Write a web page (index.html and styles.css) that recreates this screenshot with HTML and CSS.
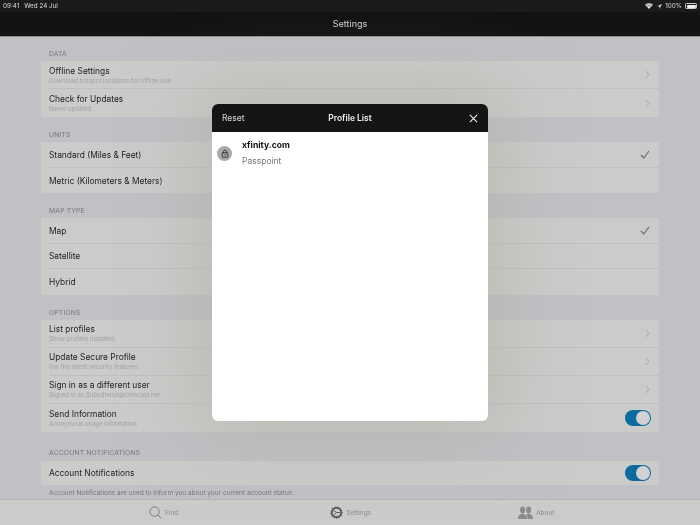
FILE: index.html
```html
<!DOCTYPE html>
<html lang="en">
<head>
<meta charset="utf-8">
<title>Settings</title>
<link rel="stylesheet" href="styles.css">
</head>
<body>
<div class="app">
  <header class="top">
    <div class="status">
      <div class="status-left"><span>09:41</span><span>Wed 24 Jul</span></div>
      <div class="status-right">
        <svg class="wifi" viewBox="0 0 12 9"><path d="M6 9 0 2.6C3.4-.8 8.6-.8 12 2.6Z" fill="#ddd"/><path d="M1.6 3.2C4-.0 8-.0 10.4 3.2M3.2 5C4.8 3.4 7.2 3.4 8.8 5" stroke="#1a1a1a" stroke-width=".7" fill="none"/></svg>
        <svg class="loc" viewBox="0 0 8 8"><path d="M8 0 0 3.6h3.8V8Z" fill="#ddd"/></svg>
        <span>100%</span>
        <span class="battery"><span class="battery-fill"></span></span>
      </div>
    </div>
    <div class="nav">Settings</div>
  </header>

  <main class="content">
    <h2 class="label">DATA</h2>
    <section class="card">
      <div class="row tall"><div class="row-text"><div class="title">Offline Settings</div><div class="sub">Download hotspot locations for offline use</div></div><svg class="chev" viewBox="0 0 6 10"><path d="M1 1l4 4-4 4"/></svg></div>
      <div class="row tall"><div class="row-text"><div class="title">Check for Updates</div><div class="sub">Never updated</div></div><svg class="chev" viewBox="0 0 6 10"><path d="M1 1l4 4-4 4"/></svg></div>
    </section>

    <h2 class="label">UNITS</h2>
    <section class="card">
      <div class="row mid"><div class="title">Standard (Miles &amp; Feet)</div><svg class="check" viewBox="0 0 10 9"><path d="M1 5l2.800 3L9 1"/></svg></div>
      <div class="row mid"><div class="title">Metric (Kilometers &amp; Meters)</div></div>
    </section>

    <h2 class="label">MAP TYPE</h2>
    <section class="card">
      <div class="row mid"><div class="title">Map</div><svg class="check" viewBox="0 0 10 9"><path d="M1 5l2.800 3L9 1"/></svg></div>
      <div class="row mid"><div class="title">Satellite</div></div>
      <div class="row mid"><div class="title">Hybrid</div></div>
    </section>

    <h2 class="label">OPTIONS</h2>
    <section class="card">
      <div class="row tall"><div class="row-text"><div class="title">List profiles</div><div class="sub">Show profiles installed.</div></div><svg class="chev" viewBox="0 0 6 10"><path d="M1 1l4 4-4 4"/></svg></div>
      <div class="row tall"><div class="row-text"><div class="title">Update Secure Profile</div><div class="sub">Get the latest security features</div></div><svg class="chev" viewBox="0 0 6 10"><path d="M1 1l4 4-4 4"/></svg></div>
      <div class="row tall"><div class="row-text"><div class="title">Sign in as a different user</div><div class="sub">Signed in as Subodhesd@comcast.net</div></div><svg class="chev" viewBox="0 0 6 10"><path d="M1 1l4 4-4 4"/></svg></div>
      <div class="row tall"><div class="row-text"><div class="title">Send Information</div><div class="sub">Anonymous usage information</div></div><span class="toggle"></span></div>
    </section>

    <h2 class="label label-wide">ACCOUNT NOTIFICATIONS</h2>
    <section class="card">
      <div class="row account"><div class="title">Account Notifications</div><span class="toggle"></span></div>
    </section>
    <p class="note">Account Notifications are used to inform you about your current account status.</p>
  </main>

  <nav class="tabs">
    <div class="tab tab-find">
      <svg class="tab-icon" viewBox="0 0 14 14"><circle cx="6" cy="6" r="5" fill="none" stroke="#777" stroke-width="1"/><path d="M9.600 9.600 13.400 13.400" stroke="#777" stroke-width="1"/></svg>
      <span>Find</span>
    </div>
    <div class="tab tab-settings">
      <svg class="tab-icon" viewBox="0 0 14 14"><circle cx="7" cy="7" r="5" fill="none" stroke="#555" stroke-width="1.800"/><circle cx="7" cy="7" r="6" fill="none" stroke="#555" stroke-width="1.200" stroke-dasharray="1.400 1.400"/><path d="M3.500 4.500 7 7l-3 3M7 7h4" stroke="#555" stroke-width="1" fill="none"/></svg>
      <span>Settings</span>
    </div>
    <div class="tab tab-about">
      <svg class="tab-icon people" viewBox="0 0 15 13"><ellipse cx="4.600" cy="4" rx="2.500" ry="3.400" fill="#8a8a8a"/><path d="M0 13c0-3 1-4 3.400-5h2.400C8 9 9 10 9 13Z" fill="#8a8a8a"/><ellipse cx="10.600" cy="4" rx="2.500" ry="3.400" fill="#8a8a8a"/><path d="M9.600 13c0-2-.5-3.700-1.400-4.600l1.300-.4h2.400C14 9 15 10 15 13Z" fill="#8a8a8a"/></svg>
      <span>About</span>
    </div>
  </nav>

  <div class="modal">
    <div class="modal-head">
      <span class="reset">Reset</span>
      <span class="modal-title">Profile List</span>
      <svg class="close" viewBox="0 0 10 10"><path d="M1 1l8 8M9 1l-8 8"/></svg>
    </div>
    <div class="profile">
      <span class="lock-badge">
        <svg viewBox="0 0 10 11"><path d="M3 5V3.200a2 2 0 0 1 4 0V5" fill="none" stroke="#222" stroke-width="1"/><rect x="1.500" y="4.600" width="7" height="5.600" rx=".6" fill="none" stroke="#222" stroke-width="1"/><rect x="4.400" y="6.500" width="1.200" height="1.800" fill="#222"/></svg>
      </span>
      <div class="profile-text">
        <div class="profile-name">xfinity.com</div>
        <div class="profile-kind">Passpoint</div>
      </div>
    </div>
  </div>
</div>
</body>
</html>
```
FILE: styles.css
```css
* { box-sizing: border-box; }
html, body { margin: 0; height: 100%; overflow: hidden; }
body { font-family: Inter, "Liberation Sans", sans-serif; background: #c1c0c5; }
.app { position: relative; width: 700px; height: 525px; display: flex; flex-direction: column; overflow: hidden; background: #c1c0c5; filter: blur(.35px); }

.top { height: 37px; flex: none; background: #131313; border-bottom: 1px solid #8e8e8e; color: #ddd; }
.status { height: 12px; padding: 0 3px; background: #1b1b1b; display: flex; justify-content: space-between; align-items: center; font-size: 6.300px; line-height: 12px; }
.status-left { display: flex; gap: 5px; }
.status-right { display: flex; align-items: center; gap: 2px; }
.wifi { width: 8px; height: 6px; margin-right: 2px; }
.loc { width: 5px; height: 5px; margin-right: 1px; }
.battery { width: 12px; height: 6px; border: .5px solid #ccc; border-radius: 1.500px; padding: .5px; display: block; margin-left: 1px; }
.battery-fill { display: block; width: 100%; height: 100%; background: #eee; border-radius: 1px; }
.nav { height: 24px; padding-bottom: 2px; display: flex; align-items: center; justify-content: center; font-size: 9px; color: #d4d4d4; }

.content { flex: 1; min-height: 0; padding: 11px 41px 0; overflow: hidden; }
.label { margin: 0; height: 13px; padding-left: 8px; font-size: 6.800px; font-weight: 400; line-height: 11px; color: #76767a; letter-spacing: .15px; }
.card { background: #cbcbca; margin-bottom: 12px; }
.card:has(+ .note) { margin-bottom: 0; }
.label-wide { height: 17.500px; padding-top: 3px; }

.row { display: flex; align-items: center; justify-content: space-between; margin-left: 8px; padding-right: 8px; border-bottom: 1px solid #bfbfbf; position: relative; }
.row:last-child { border-bottom: 0; }
.tall { height: 28px; }
.mid { height: 25.500px; }
.mid .title { padding-top: 1.500px; }
.account { height: 24px; }
.row-text { margin-top: 1px; }
.title { font-size: 8.400px; line-height: 11px; color: #222; }
.sub { font-size: 6.100px; line-height: 8px; color: #a2a2a2; }
.chev { width: 5px; height: 9px; fill: none; stroke: #999; stroke-width: 1; margin-right: 1px; }
.check { width: 10px; height: 9px; fill: none; stroke: #666; stroke-width: 1.100; margin-right: 1px; }
.toggle { width: 26px; height: 16px; border-radius: 8px; background: #0b6a9e; position: relative; }
.toggle::after { content: ""; position: absolute; right: 1px; top: 1px; width: 14px; height: 14px; border-radius: 50%; background: #d2d2d2; }
.note { margin: 4px 0 0; padding-left: 8px; font-size: 6.500px; line-height: 9px; color: #77777a; white-space: nowrap; }

.tabs { height: 26px; flex: none; background: #cbcbca; border-top: 1px solid #b2b2b4; display: flex; font-size: 6.500px; color: #8b8b8b; padding-left: 149px; }
.tab { display: flex; align-items: center; gap: 3px; }
.tab-settings { margin-left: 152px; }
.tab-about { margin-left: 147px; }
.tab-icon { width: 13px; height: 13px; }
.people { width: 15px; }

.modal { position: absolute; left: 212px; top: 104px; width: 276px; height: 317px; border-radius: 6px; background: #fff; overflow: hidden; box-shadow: 0 0 70px 15px rgba(170, 175, 160, .55); }
.modal-head { height: 28px; background: #151515; color: #e6e6e6; display: flex; align-items: center; justify-content: space-between; padding: 0 10px; position: relative; }
.reset { font-size: 8.500px; color: #d8d8d8; }
.modal-title { position: absolute; left: 0; right: 0; text-align: center; font-size: 8.500px; font-weight: 600; color: #eee; }
.close { width: 9px; height: 9px; fill: none; stroke: #eee; stroke-width: 1.200; position: relative; }
.profile { display: flex; align-items: flex-start; padding: 8px 0 0 5px; }
.lock-badge { width: 15px; height: 15px; border-radius: 50%; background: #aaa; display: flex; align-items: center; justify-content: center; margin-top: 6px; }
.lock-badge svg { width: 8px; height: 9px; }
.profile-text { margin-left: 10px; }
.profile-name { font-size: 8.600px; line-height: 11px; font-weight: 700; color: #111; }
.profile-kind { font-size: 8.500px; line-height: 11px; margin-top: 5px; color: #777; }
```
